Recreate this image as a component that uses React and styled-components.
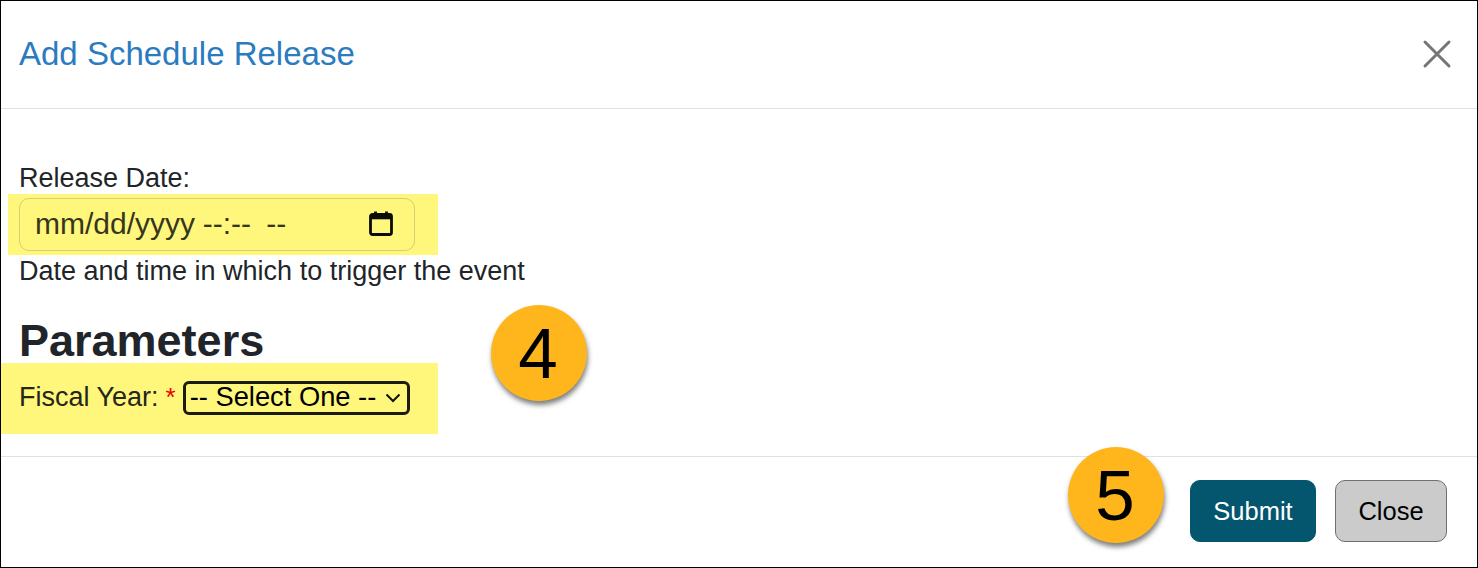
import React from 'react'
import styled, { createGlobalStyle } from 'styled-components'

const GlobalStyle = createGlobalStyle`
  html, body {
    margin: 0;
    padding: 0;
    background: #ffffff;
  }
  * {
    box-sizing: border-box;
  }
`
const Modal = styled.div`
  position: relative;
  width: 1478px;
  height: 568px;
  display: flex;
  flex-direction: column;
  background: #ffffff;
  border: 1px solid #000000;
  font-family: 'Liberation Sans', Arial, sans-serif;
  font-size: 27px;
  color: #212529;
  overflow: hidden;
`
const Header = styled.div`
  height: 108px;
  flex: none;
  display: flex;
  align-items: center;
  justify-content: space-between;
  padding: 0 25px 2px 18px;
  border-bottom: 1px solid #dee2e6;
`
const Title = styled.h5`
  margin: 0;
  font-size: 33px;
  font-weight: 400;
  color: #2b7bc0;
`
const CloseIcon = styled.button`
  width: 30px;
  height: 30px;
  padding: 0;
  border: 0;
  background: none;
  display: block;
`
const Body = styled.div`
  flex: 1;
  padding-top: 54px;
`
const FieldLabel = styled.div`
  padding-left: 18px;
  height: 31px;
  line-height: 31px;
`
const DateHighlight = styled.div`
  width: 430px;
  height: 61px;
  margin-left: 7px;
  padding: 4px 0 0 11px;
  background: #fff67c;
`
const DateField = styled.div`
  width: 396px;
  height: 53px;
  display: flex;
  align-items: center;
  justify-content: space-between;
  padding: 0 20px 2px 15px;
  border: 1px solid #d6d06e;
  border-radius: 10px;
  font-size: 30px;
  word-spacing: -0.7px;
  color: #35361c;
  white-space: pre;
`
const Help = styled.div`
  padding-left: 18px;
  height: 34px;
  line-height: 33px;
`
const Heading = styled.h2`
  margin: 23px 0 0;
  padding-left: 18px;
  height: 51px;
  line-height: 58px;
  font-size: 45px;
  font-weight: 700;
`
const FiscalHighlight = styled.div`
  width: 437px;
  height: 71px;
  display: flex;
  align-items: flex-start;
  padding: 17px 0 0 18px;
  line-height: 35px;
  background: #fff67c;
  color: #25261a;
`
const Required = styled.span`
  margin: 0 7px;
  color: #f00000;
  font-size: 26px;
`
const SelectWrap = styled.div`
  position: relative;
  width: 227px;
  height: 34px;
  svg {
    position: absolute;
    right: 9px;
    top: 13px;
    pointer-events: none;
  }
`
const SelectBox = styled.select`
  appearance: none;
  width: 100%;
  height: 100%;
  padding: 0 0 2px 4px;
  border: 3px solid #1c1c10;
  border-radius: 6px;
  background: transparent;
  font-family: inherit;
  font-size: 27.3px;
  line-height: 24px;
  color: #000000;
  outline: none;
`
const Footer = styled.div`
  height: 111px;
  flex: none;
  display: flex;
  align-items: center;
  justify-content: flex-end;
  gap: 19px;
  padding: 0 30px 2px 0;
  border-top: 1px solid #dee2e6;
`
const ActionButton = styled.button`
  height: 62px;
  width: ${(props) => (props.$primary ? '126px' : '112px')};
  border: 1px solid ${(props) => (props.$primary ? '#04566e' : '#707070')};
  border-radius: 10px;
  background: ${(props) => (props.$primary ? '#04566e' : '#cbcbcb')};
  color: ${(props) => (props.$primary ? '#ffffff' : '#000000')};
  font-family: inherit;
  font-size: 25.5px;
`
const StepBadge = styled.div`
  position: absolute;
  left: ${(props) => props.$left}px;
  top: ${(props) => props.$top}px;
  width: 96px;
  height: 96px;
  display: flex;
  align-items: center;
  justify-content: center;
  padding-right: 2px;
  border-radius: 50%;
  background: #ffb61c;
  box-shadow: 1px 4px 5px rgba(0, 0, 0, 0.5);
  color: #000000;
  font-size: 71px;
`

const App = () => {
  return (
    <>
      <GlobalStyle />
      <Modal>
        <Header>
          <Title>Add Schedule Release</Title>
          <CloseIcon aria-label="Close">
            <svg width="30" height="30" viewBox="0 0 30 30" fill="none">
              <path d="M3 3 L27 27 M27 3 L3 27" stroke="#757575" strokeWidth="3" strokeLinecap="round" />
            </svg>
          </CloseIcon>
        </Header>
        <Body>
          <FieldLabel>Release Date:</FieldLabel>
          <DateHighlight>
            <DateField>
              <span>mm/dd/yyyy --:--  --</span>
              <svg width="26" height="26" viewBox="0 0 26 26" fill="none">
                <rect x="2.5" y="3.5" width="21" height="20" rx="2" stroke="#0c0c06" strokeWidth="2.8" />
                <path d="M2.5 6.5 H23.5" stroke="#0c0c06" strokeWidth="3.6" />
                <path d="M7.5 0.5 V4 M18.5 0.5 V4" stroke="#0c0c06" strokeWidth="2.8" />
              </svg>
            </DateField>
          </DateHighlight>
          <Help>Date and time in which to trigger the event</Help>
          <Heading>Parameters</Heading>
          <FiscalHighlight>
            Fiscal Year:
            <Required>*</Required>
            <SelectWrap>
              <SelectBox defaultValue="">
                <option value="">-- Select One --</option>
              </SelectBox>
              <svg width="16" height="10" viewBox="0 0 16 10" fill="none">
                <path d="M1.5 1.5 L8 8 L14.5 1.5" stroke="#111108" strokeWidth="2" />
              </svg>
            </SelectWrap>
          </FiscalHighlight>
        </Body>
        <Footer>
          <ActionButton $primary>Submit</ActionButton>
          <ActionButton>Close</ActionButton>
        </Footer>
        <StepBadge $left={490} $top={304}>4</StepBadge>
        <StepBadge $left={1067} $top={446}>5</StepBadge>
      </Modal>
    </>
  )
}

export default App
